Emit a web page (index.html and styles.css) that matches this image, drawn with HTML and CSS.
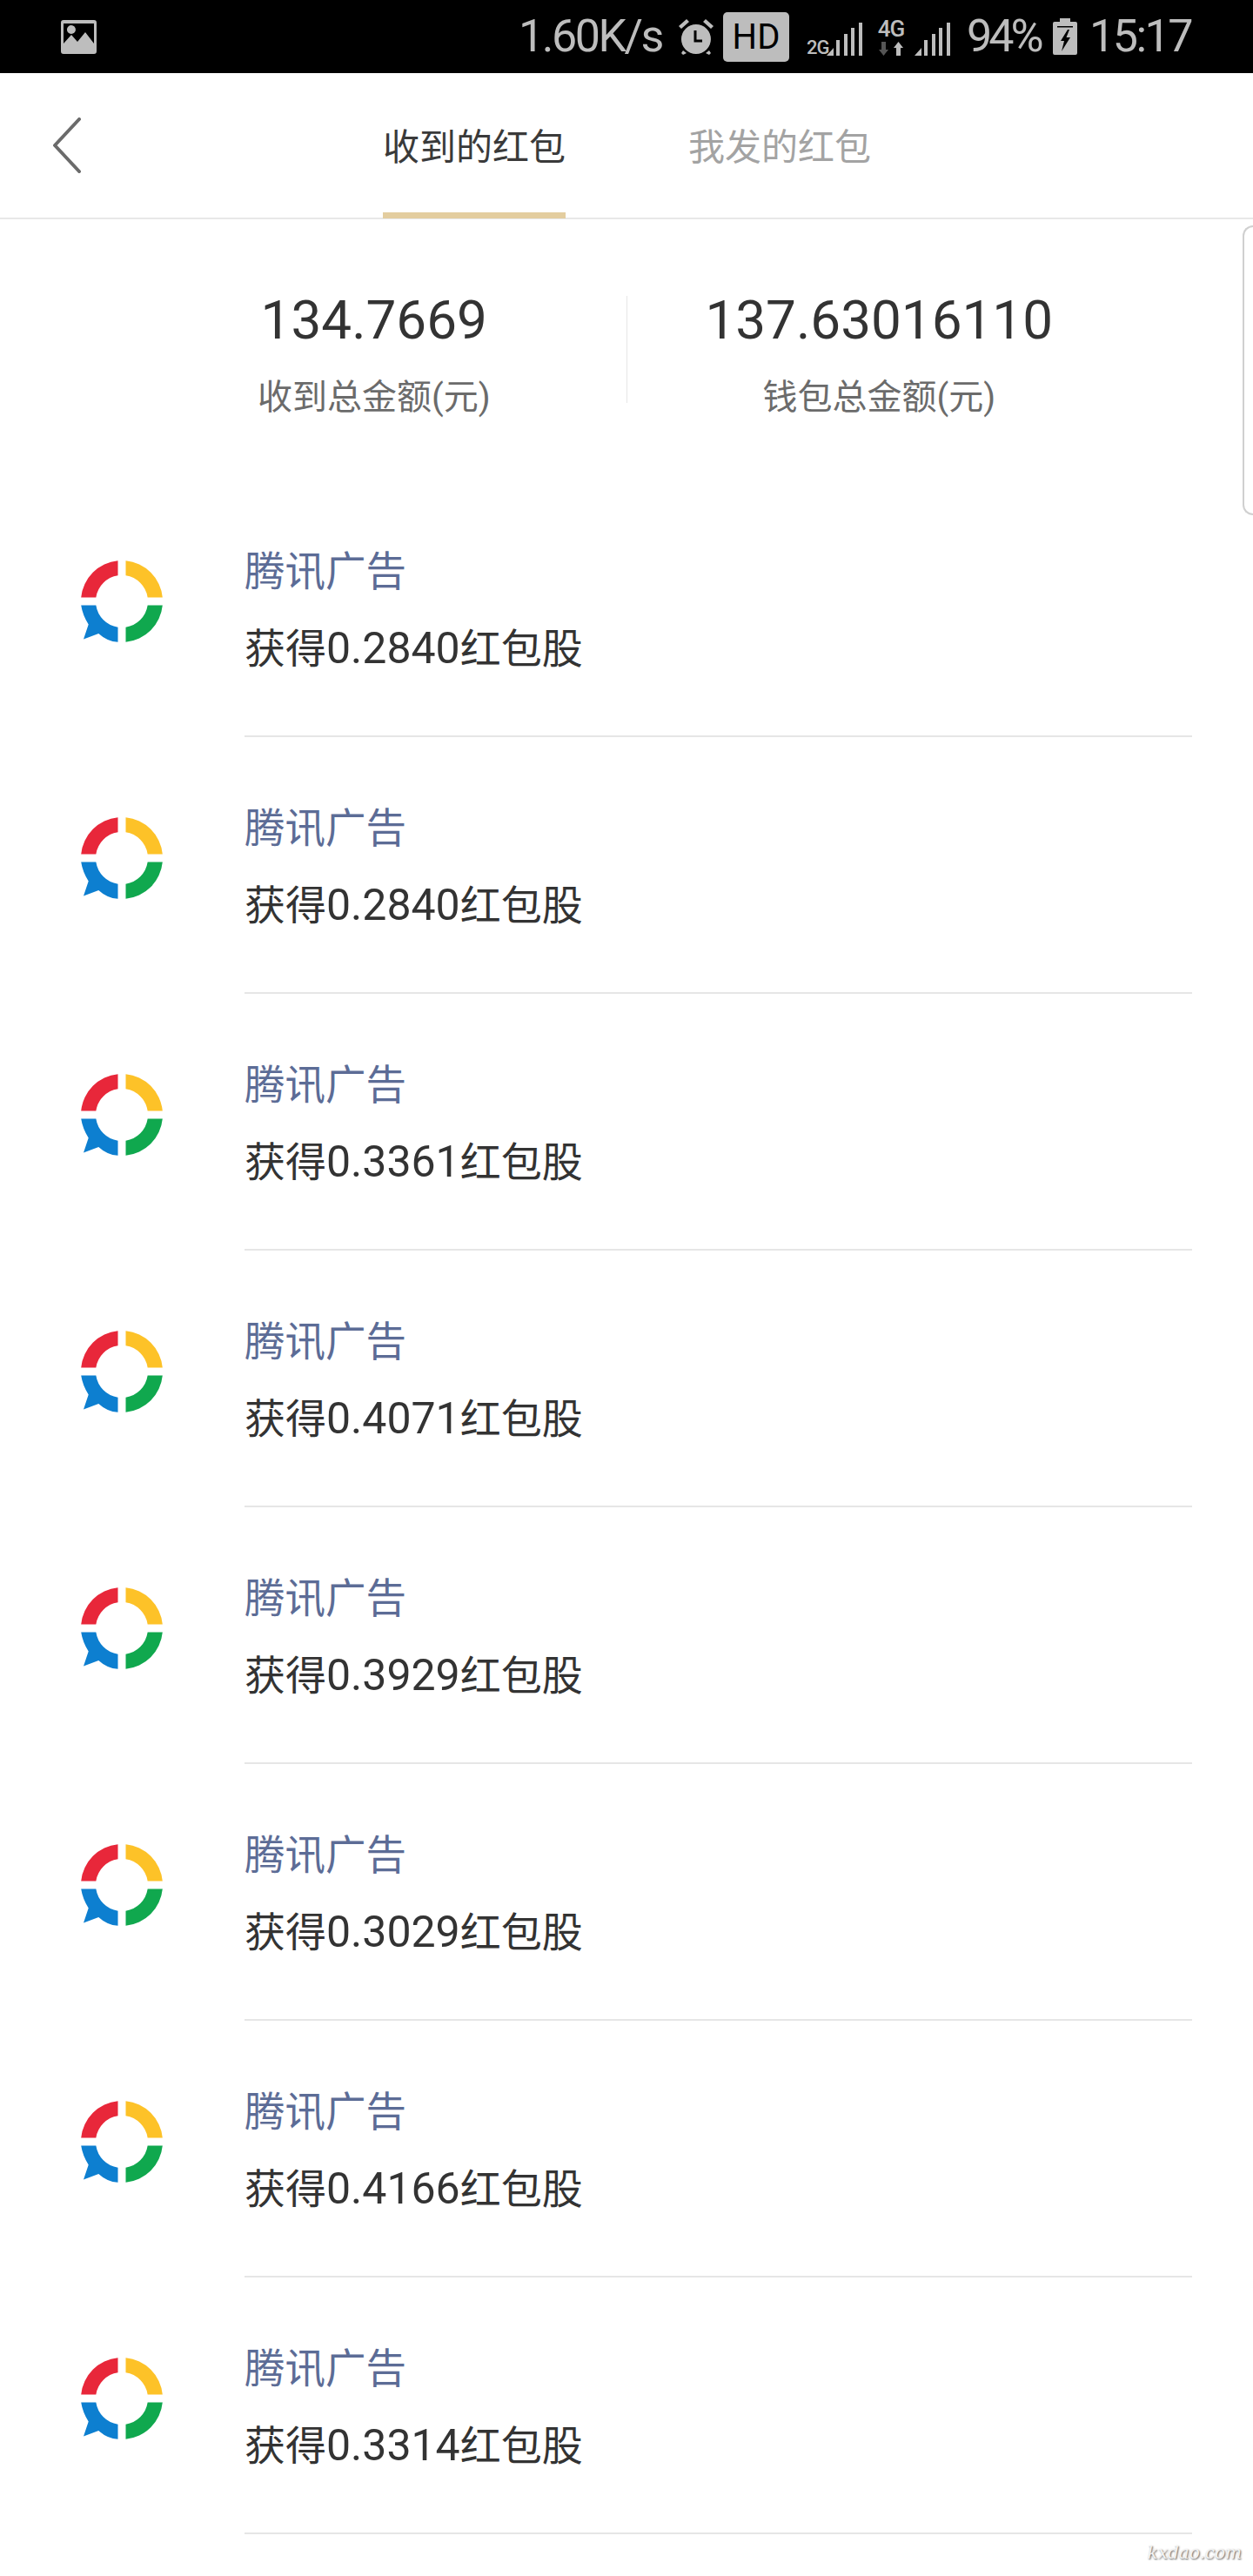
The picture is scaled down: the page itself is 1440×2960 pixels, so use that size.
FILE: index.html
```html
<!DOCTYPE html>
<html lang="zh-CN">
<head>
    <meta charset="UTF-8">
    <meta name="viewport" content="width=device-width, initial-scale=1.0">
    <title>红包</title>
    <link rel="stylesheet" href="styles.css">
</head>
<body>
    <svg class="defs" width="0" height="0">
        <symbol id="ring" viewBox="0 0 100 100">
            <path fill="#e8273a" d="M3.2 45.5A47 47 0 0 1 45.5 3.2V20.34A30 30 0 0 0 20.34 45.5Z"/>
            <path fill="#fdc228" d="M54.5 3.2A47 47 0 0 1 96.8 45.5H79.66A30 30 0 0 0 54.5 20.34Z"/>
            <path fill="#10a84e" d="M96.8 54.5A47 47 0 0 1 54.5 96.8V79.66A30 30 0 0 0 79.66 54.5Z"/>
            <path fill="#0d7fd0" d="M3.2 54.5H20.34A30 30 0 0 0 45.5 79.66V96.8Q33 96 23.3 87L6 93.5L11.7 76.5Q5 66 3.2 54.5Z"/>
        </symbol>
        <symbol id="signal" viewBox="0 0 42 38">
            <path fill="#bdbdbd" d="M0 38L8 29V38ZM11 20H15V38H11ZM20 13H24V38H20ZM28 6H32V38H28ZM37 0H41V38H37Z"/>
        </symbol>
    </svg>

    <!-- status bar -->
    <div class="status">
        <svg class="ic-image" viewBox="0 0 41 39">
            <path fill="#bdbdbd" fill-rule="evenodd" d="M3 0H38Q41 0 41 3V36Q41 39 38 39H3Q0 39 0 36V3Q0 0 3 0ZM3 4V27L12 17L19 25L28 14L38 27V4ZM12 6A5 5 0 1 1 11.9 16A5 5 0 0 1 12 6Z"/>
        </svg>
        <span class="st-text st-speed">1.60K/s</span>
        <svg class="ic-alarm" viewBox="0 0 40 41">
            <path fill="#bdbdbd" d="M20 6A17 17 0 1 1 19.9 40A17 17 0 0 1 20 6ZM9 0L12 3L3 11L0 8ZM31 0L40 8L37 11L28 3ZM5 36L9 39L5 41L3 39ZM35 36L37 39L35 41L31 39Z"/>
            <path fill="none" stroke="#000" stroke-width="3" d="M19 13V25H27"/>
        </svg>
        <span class="hd">HD</span>
        <span class="st-small st-2g">2G</span>
        <svg class="ic-signal"><use href="#signal"/></svg>
        <div class="net">
            <span class="st-small st-4g">4G</span>
            <svg class="ic-arrows" viewBox="0 0 28 16">
                <path fill="#555" d="M3 0H8V9H11L5.500 16L0 9H3Z"/>
                <path fill="#bdbdbd" d="M20 16H25V7H28L22.500 0L17 7H20Z"/>
            </svg>
        </div>
        <svg class="ic-signal ic-signal2"><use href="#signal"/></svg>
        <span class="st-text st-batt">94%</span>
        <svg class="ic-battery" viewBox="0 0 28 42">
            <path fill="#bdbdbd" d="M8 0H20V4H26Q28 4 28 6V40Q28 42 26 42H2Q0 42 0 40V6Q0 4 2 4H8Z"/>
            <path fill="#000" d="M5 9H23V10.500H5ZM17 13L9 26H13L10 38L20 22H15.500L19 13Z"/>
        </svg>
        <span class="st-text st-time">15:17</span>
    </div>

    <!-- top nav -->
    <div class="nav">
        <svg class="back" viewBox="0 0 33 64">
            <path fill="none" stroke="#6b6b6b" stroke-width="4" stroke-linecap="round" stroke-linejoin="round" d="M31 2L3 32L31 62"/>
        </svg>
        <div class="tabs">
            <div class="tab active">收到的红包</div>
            <div class="tab">我发的红包</div>
        </div>
    </div>

    <div class="handle"></div>

    <!-- totals -->
    <div class="stats">
        <div class="stat">
            <div class="num">134.7669</div>
            <div class="lbl">收到总金额(元)</div>
        </div>
        <div class="stat stat-right">
            <div class="num">137.63016110</div>
            <div class="lbl">钱包总金额(元)</div>
        </div>
    </div>

    <!-- list -->
    <div class="list">
        <div class="row">
            <svg class="logo"><use href="#ring"/></svg>
            <div class="row-body"><div class="src">腾讯广告</div><div class="desc">获得<span class="amt">0.2840</span>红包股</div></div>
        </div>
        <div class="row">
            <svg class="logo"><use href="#ring"/></svg>
            <div class="row-body"><div class="src">腾讯广告</div><div class="desc">获得<span class="amt">0.2840</span>红包股</div></div>
        </div>
        <div class="row">
            <svg class="logo"><use href="#ring"/></svg>
            <div class="row-body"><div class="src">腾讯广告</div><div class="desc">获得<span class="amt">0.3361</span>红包股</div></div>
        </div>
        <div class="row">
            <svg class="logo"><use href="#ring"/></svg>
            <div class="row-body"><div class="src">腾讯广告</div><div class="desc">获得<span class="amt">0.4071</span>红包股</div></div>
        </div>
        <div class="row">
            <svg class="logo"><use href="#ring"/></svg>
            <div class="row-body"><div class="src">腾讯广告</div><div class="desc">获得<span class="amt">0.3929</span>红包股</div></div>
        </div>
        <div class="row">
            <svg class="logo"><use href="#ring"/></svg>
            <div class="row-body"><div class="src">腾讯广告</div><div class="desc">获得<span class="amt">0.3029</span>红包股</div></div>
        </div>
        <div class="row">
            <svg class="logo"><use href="#ring"/></svg>
            <div class="row-body"><div class="src">腾讯广告</div><div class="desc">获得<span class="amt">0.4166</span>红包股</div></div>
        </div>
        <div class="row">
            <svg class="logo"><use href="#ring"/></svg>
            <div class="row-body"><div class="src">腾讯广告</div><div class="desc">获得<span class="amt">0.3314</span>红包股</div></div>
        </div>
    </div>

    <div class="mark">kxdao.com</div>
</body>
</html>
```

FILE: styles.css
```css
html, body {
    margin: 0;
    padding: 0;
}

body {
    position: relative;
    height: 2960px;
    overflow: hidden;
    background: #fff;
    font-family: Roboto, "Noto Sans CJK SC", sans-serif;
}

.defs {
    position: absolute;
}

/* status bar */
.status {
    display: flex;
    align-items: center;
    height: 84px;
    padding-left: 70px;
    background: #000;
    color: #bdbdbd;
}

.ic-image {
    width: 41px;
    height: 39px;
    margin-top: 1px;
}

.st-text {
    font-size: 52px;
    line-height: 84px;
    font-weight: 400;
    letter-spacing: -2.5px;
}

.st-speed {
    margin-left: 485px;
    width: 163px;
    white-space: nowrap;
}

.ic-alarm {
    width: 40px;
    height: 41px;
    margin-left: 21px;
}

.hd {
    width: 76px;
    height: 57px;
    margin-left: 11px;
    border-radius: 5px;
    background: #bdbdbd;
    color: #000;
    font-size: 40px;
    line-height: 57px;
    text-align: center;
}

.st-small {
    font-size: 22px;
    line-height: 22px;
    font-weight: 500;
    letter-spacing: -1px;
}

.st-2g {
    width: 23px;
    margin-left: 20px;
    margin-top: 26px;
}

.st-4g {
    font-size: 26px;
}

.ic-signal {
    width: 42px;
    height: 38px;
    margin-top: 6px;
}

.net {
    display: flex;
    flex-direction: column;
    align-items: center;
    width: 32px;
    margin-left: 16px;
    margin-top: 2px;
}

.ic-arrows {
    width: 28px;
    height: 16px;
    margin-top: 4px;
}

.ic-signal2 {
    margin-left: 11px;
}

.st-batt {
    width: 81px;
    margin-left: 18px;
    letter-spacing: -4px;
    white-space: nowrap;
}

.ic-battery {
    width: 28px;
    height: 42px;
    margin-left: 18px;
}

.st-time {
    margin-left: 14px;
    white-space: nowrap;
}

/* nav */
.nav {
    display: flex;
    align-items: center;
    height: 166px;
    padding-left: 60px;
    border-bottom: 2px solid #e8e8e8;
}

.back {
    width: 33px;
    height: 64px;
}

.tabs {
    display: flex;
    gap: 141px;
    height: 168px;
    margin-left: 347px;
}

.tab {
    width: 210px;
    font-size: 42px;
    line-height: 174px;
    color: #a3a3a3;
    text-align: center;
    white-space: nowrap;
}

.tab.active {
    height: 161px;
    border-bottom: 7px solid #e3cd9f;
    color: #3a3a3a;
}

.handle {
    position: absolute;
    top: 259px;
    right: 0;
    width: 10px;
    height: 329px;
    border: 2px solid #d0d0d0;
    border-right: 0;
    border-radius: 14px 0 0 14px;
}

/* totals */
.stats {
    display: flex;
    height: 300px;
    padding: 0 140px;
    box-sizing: border-box;
}

.stat {
    width: 580px;
    height: 123px;
    margin-top: 88px;
    text-align: center;
}

.stat-right {
    border-left: 1px solid #e6e6e6;
}

.num {
    font-size: 62px;
    line-height: 56px;
    color: #333;
}

.lbl {
    margin-top: 36px;
    font-size: 40px;
    line-height: 50px;
    color: #6b6b6b;
}

/* rows */
.row {
    display: flex;
    align-items: flex-start;
    padding: 0 70px 0 90px;
}

.logo {
    flex: none;
    width: 100px;
    height: 100px;
    margin-top: 89px;
}

.row-body {
    flex: 1;
    height: 232px;
    margin-left: 91px;
    padding-top: 61px;
    border-bottom: 2px solid #e6e6e6;
}

.src {
    font-size: 46.500px;
    line-height: 88px;
    color: #5c6c96;
}

.desc {
    height: 88px;
    font-size: 47px;
    line-height: 88px;
    color: #333;
}

.amt {
    font-size: 50px;
}

.mark {
    position: absolute;
    right: 13px;
    bottom: 12px;
    font-family: "DejaVu Serif", serif;
    font-style: italic;
    font-size: 20px;
    line-height: 30px;
    color: #f4f4f4;
    text-shadow: 1px 1px 2px #555;
}
```
